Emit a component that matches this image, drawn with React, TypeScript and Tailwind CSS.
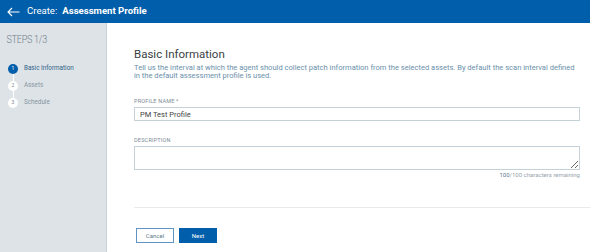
import { useState } from "react";

const steps = [
  { n: 1, label: "Basic Information", active: true },
  { n: 2, label: "Assets", active: false },
  { n: 3, label: "Schedule", active: false },
];

const App = () => {
  const [name, setName] = useState("PM Test Profile");

  return (
    <div className="w-[590px] h-[252px] flex flex-col bg-white font-['Roboto',sans-serif] overflow-hidden">
      <header className="h-[23px] shrink-0 bg-[#005eab] flex items-center pl-[7px] text-white">
        <svg width="13" height="10" viewBox="0 0 13 10" fill="none" stroke="white" strokeWidth="1.1">
          <path d="M12.5 5H1M5 1L1 5l4 4" />
        </svg>
        <span className="ml-[7px] text-[9.6px]">Create:</span>
        <span className="ml-[5px] text-[9.6px] font-bold">Assessment Profile</span>
      </header>

      <div className="flex flex-1 min-h-0">
        <aside className="w-[107px] shrink-0 bg-[#dde3e7] border-r border-[#c9d2d8] pt-[11px]">
          <div className="pl-[8px] h-[12px] leading-[12px] text-[11px] font-light text-[#6f7d87] tracking-[-0.3px] scale-x-[0.82] origin-left">
            STEPS 1/3
          </div>
          <div className="relative mt-[14px] pl-[8px]">
            <div className="absolute left-[12.5px] top-[6px] h-[34px] w-[1.5px] bg-white" />
            {steps.map((s) => (
              <div key={s.n} className="relative flex items-center h-[17px]">
                <span
                  className={
                    s.active
                      ? "w-[10px] h-[10px] rounded-full bg-[#005eab] text-white text-[5px] flex items-center justify-center"
                      : "w-[10px] h-[10px] rounded-full bg-white text-[#7c8a94] text-[5px] flex items-center justify-center"
                  }
                >
                  {s.n}
                </span>
                <span
                  className={
                    s.active
                      ? "ml-[6px] text-[6.3px] text-[#2f5f88]"
                      : "ml-[6px] text-[6.3px] text-[#8795a0]"
                  }
                >
                  {s.label}
                </span>
              </div>
            ))}
          </div>
        </aside>

        <main className="flex-1 flex flex-col pl-[27px] pt-[24px]">
          <div className="pr-[10px]">
            <h1 className="text-[11.5px] text-[#3a3f44] leading-[14px]">Basic Information</h1>
            <p className="mt-[3px] text-[7.55px] leading-[8px] text-[#6a90aa]">
              Tell us the interval at which the agent should collect patch information from the selected assets. By default the scan interval defined in the default assessment profile is used.
            </p>

            <label className="block mt-[17px] leading-[8px] text-[5.5px] text-[#7d8c96] tracking-[0.2px]">PROFILE NAME *</label>
            <input
              value={name}
              onChange={(e) => setName(e.target.value)}
              className="block mt-[2px] w-full h-[14px] border border-[#c5d1d9] px-[5px] text-[7.5px] text-[#444] outline-none"
            />

            <label className="block mt-[15px] leading-[8px] text-[5.5px] text-[#7d8c96] tracking-[0.2px]">DESCRIPTION</label>
            <textarea className="mt-[2px] block w-full h-[24px] border border-[#c5d1d9] px-[5px] text-[7.5px] outline-none resize-y" />
            <div className="mt-[1px] leading-[8px] text-right text-[6px] text-[#98a4ac]">
              <span className="text-[#5e7a8e]">100</span>/100 characters remaining
            </div>
          </div>

          <div className="mt-[28px] border-t border-[#e6eaed]" />

          <div className="mt-[20px] flex gap-[5px] pl-[2px]">
            <button className="w-[38px] h-[15px] border border-[#5e93c4] bg-white text-[6px] text-[#5e7a8e]">
              Cancel
            </button>
            <button className="w-[38px] h-[15px] bg-[#005eab] text-[6px] text-white">Next</button>
          </div>
        </main>
      </div>
    </div>
  );
};

export default App;
